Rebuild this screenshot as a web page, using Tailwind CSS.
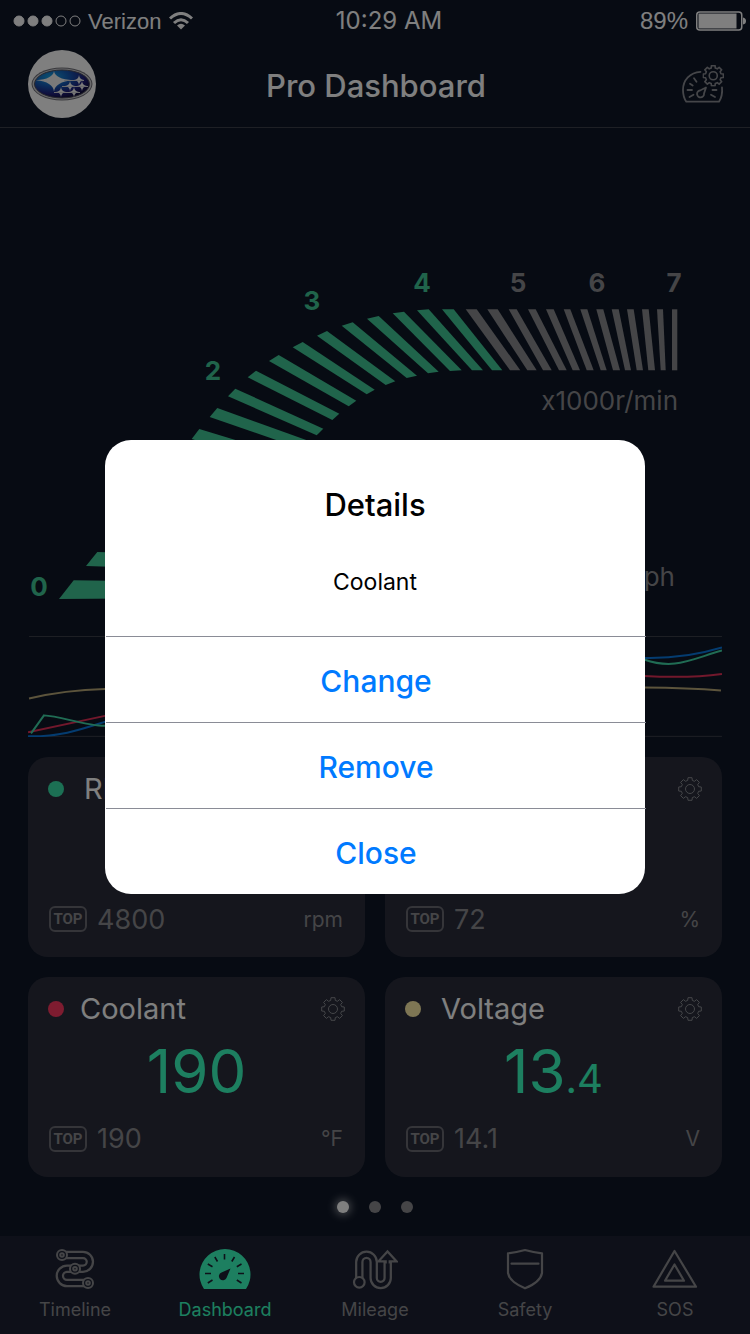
<!DOCTYPE html>
<html lang="en">
    <head>
        <meta charset="utf-8" />
        <meta name="viewport" content="width=device-width, initial-scale=1" />
        <title>Pro Dashboard</title>
        <script src="https://cdn.jsdelivr.net/npm/@tailwindcss/browser@4"></script>
    </head>
    <body class="bg-[#0e1626] font-['Inter','Liberation_Sans',sans-serif] text-white">
        <!-- shared icons -->
        <svg class="hidden">
            <symbol id="gear" viewBox="-12 -12 24 24">
                <path
                    d="M-2-11.3H2L2.3-8.6 4.45-7.7 6.58-9.4 9.4-6.58 7.7-4.45 8.6-2.3 11.3-2V2L8.6 2.3 7.7 4.45 9.4 6.58 6.58 9.4 4.45 7.7 2.3 8.6 2 11.3H-2L-2.3 8.6 -4.45 7.7 -6.58 9.4 -9.4 6.58 -7.7 4.45 -8.6 2.3 -11.3 2V-2L-8.6-2.3 -7.7-4.45 -9.4-6.58 -6.58-9.4 -4.45-7.7 -2.3-8.6Z"
                    fill="none" stroke="currentColor" stroke-linejoin="round"
                />
                <circle r="4.5" fill="none" stroke="currentColor" />
            </symbol>
            <symbol id="star" viewBox="-10 -10 20 20">
                <path d="M0-10Q1-1 10 0Q1 1 0 10Q-1 1-10 0Q-1-1 0-10Z" fill="#f4f4f4" />
            </symbol>
        </svg>

        <div class="flex min-h-screen flex-col">
            <!-- status bar -->
            <div class="grid h-10 grid-cols-3 items-center pl-3 pr-1 pt-0.5 font-['Liberation_Sans',sans-serif]">
                <div class="flex items-center gap-1.5">
                    <svg class="h-3 w-[70px]" viewBox="0 0 70 12" fill="#fff" stroke="#fff">
                        <circle cx="7" cy="6" r="5" />
                        <circle cx="21" cy="6" r="5" />
                        <circle cx="35" cy="6" r="5" />
                        <circle cx="49" cy="6" r="5" fill="none" />
                        <circle cx="63" cy="6" r="5" fill="none" />
                    </svg>
                    <span class="text-[22px]">Verizon</span>
                    <svg class="ml-0.5 h-[18px] w-6" viewBox="0 0 24 18" fill="none" stroke="#fff" stroke-width="3">
                        <path d="M1 6.5Q12-3.5 23 6.5" />
                        <path d="M5 11Q12 4.5 19 11" />
                        <path d="M8 13.5Q12 10 16 13.5L12 17.5Z" fill="#fff" stroke="none" />
                    </svg>
                </div>
                <div class="pl-5 text-center font-['Inter',sans-serif] text-2xl">10:29 AM</div>
                <div class="flex items-center justify-end gap-2">
                    <span class="text-2xl">89%</span>
                    <svg class="h-5 w-[50px]" viewBox="0 0 50 20">
                        <rect x=".75" y="1" width="45" height="18" rx="3" fill="none" stroke="#fff" stroke-width="1.5" />
                        <rect x="2.5" y="2.5" width="38" height="15" fill="#fff" />
                        <path d="M47 6.5Q50 7 50 10T47 13.5Z" fill="#fff" />
                    </svg>
                </div>
            </div>

            <header class="grid h-[88px] grid-cols-[1fr_auto_1fr] items-center border-b border-[#3c404a] pl-7 pr-[26px]">
                <a href="#" aria-label="My car" class="size-[68px] rounded-full bg-white">
                    <svg class="size-full" viewBox="0 0 68 68">
                        <defs>
                            <radialGradient id="oval" cx=".3" cy=".25" r=".8">
                                <stop offset="0" stop-color="#18a4e4" />
                                <stop offset=".4" stop-color="#155cb8" />
                                <stop offset=".75" stop-color="#20207c" />
                                <stop offset="1" stop-color="#100c38" />
                            </radialGradient>
                        </defs>
                        <ellipse cx="34" cy="34" rx="30.5" ry="16.5" fill="#707078" />
                        <ellipse cx="34" cy="34" rx="29.5" ry="15.5" fill="#d0d0d4" />
                        <ellipse cx="34" cy="34" rx="27.5" ry="14" fill="url(#oval)" stroke="#50505c" />
                        <path d="M26 21Q27 29 45 30.3Q27 32 26 41.5Q25 32 8 30.3Q25 29 26 21Z" fill="#f4f4f4" />
                        <use href="#star" x="46" y="25" width="10" height="10" />
                        <use href="#star" x="37" y="31" width="10" height="10" />
                        <use href="#star" x="49" y="31" width="10" height="10" />
                        <use href="#star" x="28" y="37" width="10" height="10" />
                        <use href="#star" x="41" y="37" width="10" height="10" />
                        <path d="M36 30.5H56M34 36.5H60M26 42.5H52" stroke="#d4d4d8" />
                    </svg>
                </a>
                <h1 class="pt-1.5 text-[31px] font-medium">Pro Dashboard</h1>
                <button aria-label="Dashboard settings" class="justify-self-end text-[#8a8c92]">
                    <svg class="h-[38px] w-[42px]" viewBox="0 0 42 38" fill="none" stroke="currentColor" stroke-width="1.8" stroke-linecap="round" stroke-linejoin="round">
                        <path d="M18.5 6.8C8 7.5 1 15 1 25Q1 32 4.3 36.7H37Q40.8 31 40 22.5" />
                        <path d="M12 13.3L14.5 16.7M8 18.7L10.7 20.5M5.5 25H10M7.5 32L11.5 29.7M30.5 25H34.5M29 29.7L33 32" />
                        <path d="M24 22.5L18 25.5A3.5 3.5 0 1 0 22 28.5Z" />
                        <use href="#gear" x="20.5" y="0" width="21.5" height="21.5" />
                    </svg>
                </button>
            </header>

            <!-- rev counter -->
            <section aria-label="Engine speed">
                <svg class="w-full" viewBox="0 128 750 508">
                    <g fill="#40c896">
                        <path d="M73.7 580.3L59 599L200 598V582Z" />
                        <path d="M97.3 552L86 566L210 570V555Z" />
                        <path d="M199.3 429L191.7 439L290 469L298 459Z" />
                        <path d="M217.3 408L209.7 417L302 449L309 441Z" />
                        <path d="M235.3 388.7L228 396.3L316.7 435.3L323.3 428.7Z" />
                        <path d="M256 370.7L247.7 377.3L332.3 420L339.3 413.7Z" />
                        <path d="M278.7 355L269 361L348.7 406.3L356.3 400.7Z" />
                        <path d="M302.7 342L292.7 347.3L366.7 394.3L374.7 389.7Z" />
                        <path d="M327 331L317 335.7L385.7 385L395.3 381.3Z" />
                        <path d="M352.7 322.3L341.7 325.7L406.7 378L417 375.7Z" />
                        <path d="M378.7 316L367 318.7L428 373.3L438.7 371.7Z" />
                        <path d="M404 311.7L392.7 313.3L450 371L461.7 370.3Z" />
                        <path d="M428.7 309.3L417 310.3L472 370.3H483Z" />
                        <path d="M453.7 309.3H442L492 370.3H502.3Z" />
                    </g>
                    <g fill="#8a8a8e">
                        <path d="M476.7 309.3H465.7L510 370.3H520.3Z" />
                        <path d="M497.7 309.3H487.3L527.3 370.3H536.7Z" />
                        <path d="M516.7 309.3H508.7L543 370.3H551.7Z" />
                        <path d="M535.7 309.3H528L559 370.3H566.7Z" />
                        <path d="M553.7 309.3H546L572.7 370.3H580Z" />
                        <path d="M570.3 309.3H563.7L586.7 370.3H593.7Z" />
                        <path d="M587.3 309.3H580.3L600.7 370.3H606.7Z" />
                        <path d="M603.3 309.3H596.3L613 370.3H620Z" />
                        <path d="M618.7 309.3H611.7L625 370.3H631Z" />
                        <path d="M633.7 309.3H627L636.7 370.3H643Z" />
                        <path d="M648.7 309.3H642L648.3 370.3H655Z" />
                        <path d="M663 309.3H657L660.7 370.3H665.7Z" />
                        <path d="M677.3 309.3H672V370.3H677.3Z" />
                    </g>
                    <g fill="#40c896" font-size="26" font-weight="700" text-anchor="middle">
                        <text x="39" y="596">0</text>
                        <text x="213" y="380">2</text>
                        <text x="312" y="310">3</text>
                        <text x="422" y="292">4</text>
                    </g>
                    <g fill="#8a8a8e" font-size="26" font-weight="700" text-anchor="middle">
                        <text x="518" y="292">5</text>
                        <text x="597" y="292">6</text>
                        <text x="674" y="292">7</text>
                    </g>
                    <g fill="#8a8a8e" font-size="26" text-anchor="end">
                        <text x="678" y="410">x1000r/min</text>
                        <text x="675" y="586">mph</text>
                    </g>
                </svg>
            </section>

            <!-- history chart -->
            <section aria-label="History" class="px-7">
                <svg class="w-full" viewBox="28 636 695 101" fill="none" stroke-width="2">
                    <path d="M29 636.5H723M29 736.5H723" stroke="#3c404a" stroke-width="1" />
                    <path d="M29 698.5Q65 690 105 689C300 687 480 686 645 687.5Q690 688 722 690.5" stroke="#b8a878" />
                    <path d="M28 732.5L105 716C300 680 480 674 645 676Q690 678.5 723 674" stroke="#e43058" />
                    <path d="M28 736.5C60 737 80 730 105 722C300 670 480 655 645 658Q685 659 723 647.5" stroke="#0878e0" />
                    <path d="M31 733.5L44 715.5C60 716 85 726 105 726C300 720 500 600 645 659.5C675 670 690 660 723 650.5" stroke="#40d8a8" />
                </svg>
            </section>

            <main class="grid grid-cols-2 gap-5 px-7 pt-5">
                <section class="rounded-[20px] bg-[#2a2d3b] px-5 pb-[22px] pt-4">
                    <div class="flex h-8 items-center">
                        <span class="size-4 rounded-full bg-[#38e0a8]"></span>
                        <h2 class="ml-5 text-[29px]">RPM</h2>
                        <button aria-label="RPM settings" class="ml-auto text-[#8a8c92]">
                            <svg class="size-6"><use href="#gear" /></svg>
                        </button>
                    </div>
                    <p class="mt-3 h-[68px]"></p>
                    <div class="mt-[18px] flex h-8 items-center text-[#8a8a8e]">
                        <span class="ml-px flex h-[26px] w-[38px] items-center justify-center rounded-md border-2 border-[#6a6a72] font-['Roboto',sans-serif] text-[15px] font-bold">TOP</span>
                        <span class="ml-[10px] pt-0.5 text-[27px]">4800</span>
                        <span class="ml-auto mr-0.5 pt-0.5 text-[21px]">rpm</span>
                    </div>
                </section>

                <section class="rounded-[20px] bg-[#2a2d3b] px-5 pb-[22px] pt-4">
                    <div class="flex h-8 items-center">
                        <button aria-label="Settings" class="ml-auto text-[#8a8c92]">
                            <svg class="size-6"><use href="#gear" /></svg>
                        </button>
                    </div>
                    <p class="mt-3 h-[68px]"></p>
                    <div class="mt-[18px] flex h-8 items-center text-[#8a8a8e]">
                        <span class="ml-px flex h-[26px] w-[38px] items-center justify-center rounded-md border-2 border-[#6a6a72] font-['Roboto',sans-serif] text-[15px] font-bold">TOP</span>
                        <span class="ml-[10px] pt-0.5 text-[27px]">72</span>
                        <span class="ml-auto mr-0.5 pt-0.5 text-[21px]">%</span>
                    </div>
                </section>

                <section class="rounded-[20px] bg-[#2a2d3b] px-5 pb-[22px] pt-4">
                    <div class="flex h-8 items-center">
                        <span class="size-4 rounded-full bg-[#fc3860]"></span>
                        <h2 class="ml-4 text-[29px]">Coolant</h2>
                        <button aria-label="Coolant settings" class="ml-auto text-[#8a8c92]">
                            <svg class="size-6"><use href="#gear" /></svg>
                        </button>
                    </div>
                    <p class="mt-3 h-[68px] text-center text-[60px] leading-[68px] text-[#3affc0]">190</p>
                    <div class="mt-[18px] flex h-8 items-center text-[#8a8a8e]">
                        <span class="ml-px flex h-[26px] w-[38px] items-center justify-center rounded-md border-2 border-[#6a6a72] font-['Roboto',sans-serif] text-[15px] font-bold">TOP</span>
                        <span class="ml-[10px] text-[27px]">190</span>
                        <span class="ml-auto mr-0.5 text-[21px]">°F</span>
                    </div>
                </section>

                <section class="rounded-[20px] bg-[#2a2d3b] px-5 pb-[22px] pt-4">
                    <div class="flex h-8 items-center">
                        <span class="size-4 rounded-full bg-[#fceca8]"></span>
                        <h2 class="ml-5 text-[29px]">Voltage</h2>
                        <button aria-label="Voltage settings" class="ml-auto text-[#8a8c92]">
                            <svg class="size-6"><use href="#gear" /></svg>
                        </button>
                    </div>
                    <p class="mt-3 h-[68px] text-center text-[60px] leading-[68px] text-[#3affc0]">13<span class="text-[40px] leading-none">.4</span></p>
                    <div class="mt-[18px] flex h-8 items-center text-[#8a8a8e]">
                        <span class="ml-px flex h-[26px] w-[38px] items-center justify-center rounded-md border-2 border-[#6a6a72] font-['Roboto',sans-serif] text-[15px] font-bold">TOP</span>
                        <span class="ml-[10px] text-[27px]">14.1</span>
                        <span class="ml-auto mr-0.5 text-[21px]">V</span>
                    </div>
                </section>
            </main>

            <!-- pager -->
            <div class="flex justify-center gap-5 pt-6">
                <span class="size-3 rounded-full bg-white shadow-[0_0_8px_2px_#ffffff80]"></span>
                <span class="size-3 rounded-full bg-[#8a8a8e]"></span>
                <span class="size-3 rounded-full bg-[#8a8a8e]"></span>
            </div>

            <nav class="mt-auto grid grid-cols-5 bg-[#1c2132] pb-3 pt-3 text-lg leading-6 text-[#8a8a8e]">
                <a href="#" class="flex flex-col items-center gap-2">
                    <svg class="h-[42px] w-10" viewBox="0 0 40 42" fill="none">
                        <path d="M7 7H28A6.85 6.85 0 0 1 28 20.7H12A7.1 7.1 0 0 0 12 35H33" stroke="currentColor" stroke-width="8.5" />
                        <path d="M7 7H28A6.85 6.85 0 0 1 28 20.7H12A7.1 7.1 0 0 0 12 35H33" stroke="#1c2132" stroke-width="4" />
                        <g fill="#1c2132" stroke="currentColor" stroke-width="2">
                            <circle cx="7" cy="7" r="5" />
                            <circle cx="20" cy="20.7" r="5" />
                            <circle cx="33" cy="35" r="5" />
                            <circle cx="7" cy="7" r="1.8" />
                            <circle cx="20" cy="20.7" r="1.8" />
                            <circle cx="33" cy="35" r="1.8" />
                        </g>
                    </svg>
                    Timeline
                </a>
                <a href="#" class="flex flex-col items-center gap-2 text-[#3affc0]">
                    <svg class="h-[42px] w-[52px]" viewBox="0 -1 52 42">
                        <path d="M5 40A25.5 25.5 0 1 1 47 40Z" fill="currentColor" />
                        <path d="M25.5 5V10.5M15.8 8L18.5 12.5M35.5 8L32.8 12.5M8.8 15L13.5 17.8M42.5 15L37.8 17.8M6 24.5H12M39 24.5H45M8.8 34L13.5 31M42.5 34L37.8 31" stroke="#1c2132" stroke-width="1.6" />
                        <path d="M31.5 19.5L22.5 23.5A4 4 0 1 0 27.5 29Z" fill="#1c2132" />
                    </svg>
                    Dashboard
                </a>
                <a href="#" class="flex flex-col items-center gap-2">
                    <svg class="h-[42px] w-[46px]" viewBox="0 -2 46 42" fill="none">
                        <path d="M7.3 30V12A7.2 7.2 0 0 1 21.7 12V28A7 7 0 0 0 35.7 28V11" stroke="currentColor" stroke-width="8.5" />
                        <path d="M7.3 30V12A7.2 7.2 0 0 1 21.7 12V28A7 7 0 0 0 35.7 28V11" stroke="#1c2132" stroke-width="4" />
                        <circle cx="7.3" cy="32.3" r="5.3" fill="#1c2132" stroke="currentColor" stroke-width="2.2" />
                        <path d="M33.7 13.5V11.3H26.5L35.5 1.5L44.5 11.3H37.7V13.5" fill="#1c2132" stroke="currentColor" stroke-width="2.2" />
                    </svg>
                    Mileage
                </a>
                <a href="#" class="flex flex-col items-center gap-2">
                    <svg class="h-[42px] w-[38px]" viewBox="0 0 38 42" fill="none" stroke="currentColor" stroke-width="2.2" stroke-linecap="round" stroke-linejoin="round">
                        <path d="M19 2Q28 4.5 36 5.3V25Q34.5 34 19 40.3Q3.5 34 2 25V5.3Q10 4.5 19 2Z" />
                        <path d="M5.5 15.7H32.5" />
                    </svg>
                    Safety
                </a>
                <a href="#" class="flex flex-col items-center gap-2">
                    <svg class="h-[42px] w-[46px]" viewBox="0 0 46 42" fill="none" stroke="currentColor" stroke-width="2.2" stroke-linejoin="round">
                        <path d="M22.5 3L44 38.7H1.5Z" />
                        <path d="M22.5 16.5L32 32.7H13Z" />
                    </svg>
                    SOS
                </a>
            </nav>
        </div>

        <!-- details dialog -->
        <div class="fixed inset-0 flex items-center justify-center bg-black/50">
            <div role="dialog" aria-labelledby="dialog-title" class="w-[72%] rounded-[26px] bg-white text-black">
                <div class="px-6 pb-9 pt-10 text-center">
                    <h2 id="dialog-title" class="text-[31px] font-medium leading-[50px]">Details</h2>
                    <p class="mt-[34px] text-[23px] leading-9">Coolant</p>
                </div>
                <div class="-mr-px ml-px text-[30px] font-medium text-[#007aff]">
                    <button class="block h-[86px] w-full border-t border-[#8a8c96] pt-1">Change</button>
                    <button class="block h-[86px] w-full border-t border-[#8a8c96] pt-1">Remove</button>
                    <button class="block h-[86px] w-full border-t border-[#8a8c96] pt-1">Close</button>
                </div>
            </div>
        </div>
    </body>
</html>
